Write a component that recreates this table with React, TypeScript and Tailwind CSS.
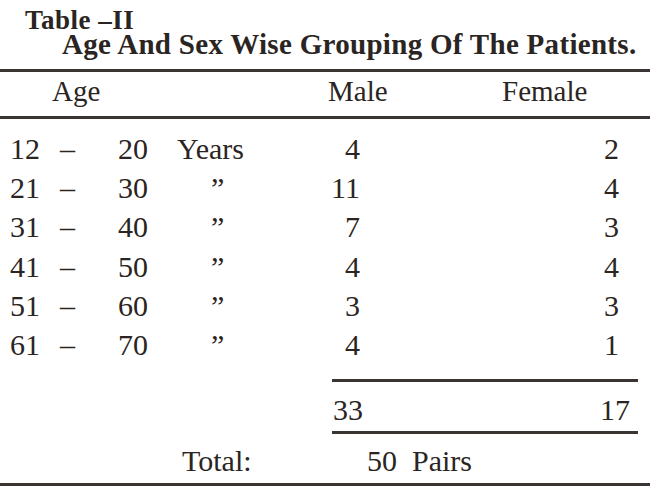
const rows = [
  { from: "12", to: "20", unit: "Years", male: "4", female: "2" },
  { from: "21", to: "30", unit: "”", male: "11", female: "4" },
  { from: "31", to: "40", unit: "”", male: "7", female: "3" },
  { from: "41", to: "50", unit: "”", male: "4", female: "4" },
  { from: "51", to: "60", unit: "”", male: "3", female: "3" },
  { from: "61", to: "70", unit: "”", male: "4", female: "1" },
];

const Rule = ({ className = "" }: { className?: string }) => (
  <div className={`h-[3px] bg-[#3a3532] ${className}`} />
);

export default function App() {
  return (
    <div className="w-[650px] h-[503px] bg-white text-[#2a2522] font-['Liberation_Serif',serif] overflow-hidden">
      <div className="pt-[8px] pl-[25px] text-[27px] font-bold leading-[24px] tracking-[0.5px]">
        Table –II
      </div>
      <div className="pl-[62px] text-[29px] font-bold leading-[24px] tracking-[0.3px]">
        Age And Sex Wise Grouping Of The Patients.
      </div>

      <Rule className="mt-[13px]" />

      <div className="flex text-[29px] leading-[39px]">
        <span className="w-[328px] pl-[52px]">Age</span>
        <span className="w-[174px]">Male</span>
        <span>Female</span>
      </div>

      <Rule className="mt-[5px]" />

      <div className="pt-[10px]">
        {rows.map((r) => (
          <div key={r.from} className="flex pl-[10px] text-[30px] leading-[39.2px]">
            <span className="w-[50px]">{r.from}</span>
            <span className="w-[58px]">–</span>
            <span className="w-[59px]">{r.to}</span>
            <span className={`w-[117px] ${r.unit === "Years" ? "" : "pl-[34px]"}`}>{r.unit}</span>
            <span className="w-[66px] text-right">{r.male}</span>
            <span className="w-[259px] text-right">{r.female}</span>
          </div>
        ))}
      </div>

      <div className="ml-[332px] w-[306px]">
        <Rule className="mt-[15px]" />
        <div className="mt-[8px] flex justify-between pl-[1px] pr-[8px] text-[30px] leading-[39.2px]">
          <span>33</span>
          <span>17</span>
        </div>
        <Rule className="mt-[2px]" />
      </div>

      <div className="mt-[7px] flex text-[30px] leading-[39.2px]">
        <span className="w-[367px] pl-[182px]">Total:</span>
        <span>50</span>
        <span className="ml-[15px]">Pairs</span>
      </div>

      <Rule className="mt-[2px]" />
    </div>
  );
}
